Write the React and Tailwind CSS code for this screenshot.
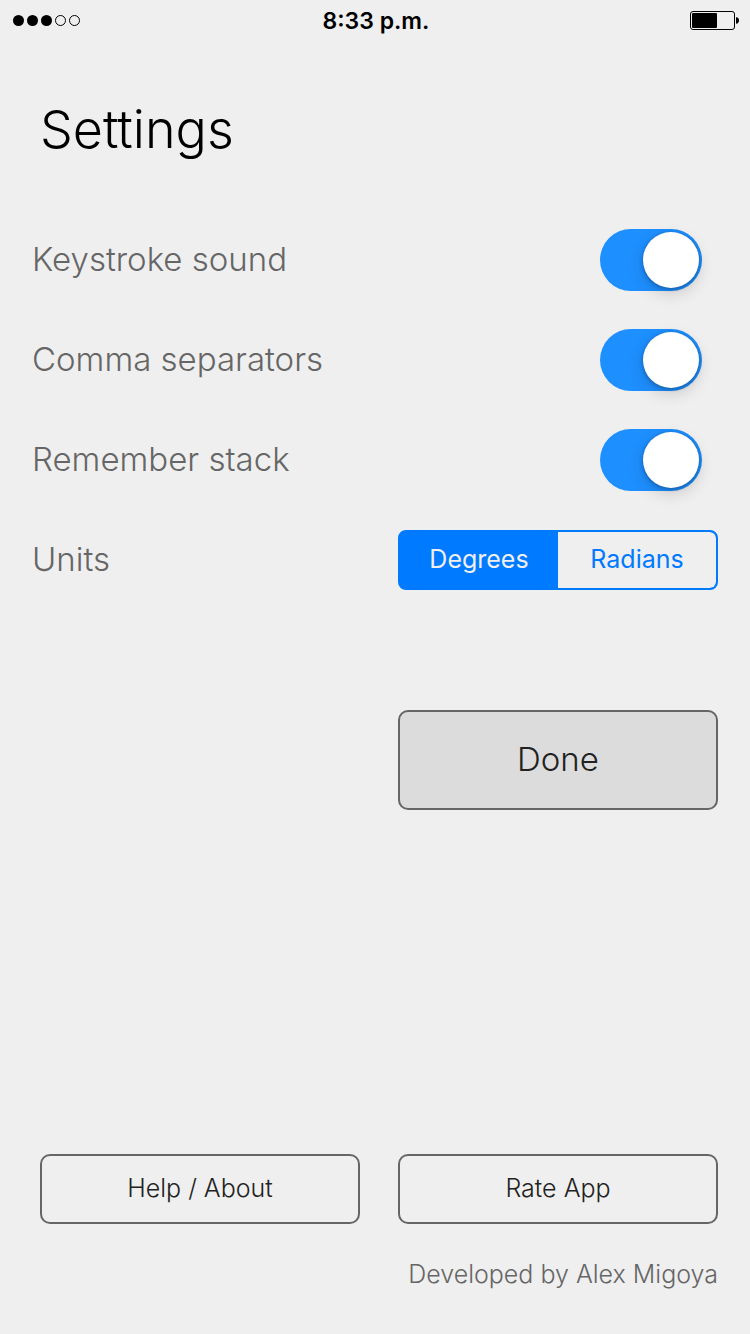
import React, { useState } from "react";

const StatusBar = () => {
  return (
    <header className="grid grid-cols-3 items-center h-[42px] pl-3 pr-2.5">
      <svg width="70" height="12" viewBox="0 0 70 12" aria-hidden="true">
        <circle cx="6.5" cy="5.5" r="5.5" />
        <circle cx="20.5" cy="5.5" r="5.5" />
        <circle cx="34.5" cy="5.5" r="5.5" />
        <circle cx="48.5" cy="5.5" r="5" fill="none" stroke="#000" />
        <circle cx="62.5" cy="5.5" r="5" fill="none" stroke="#000" />
      </svg>
      <p className="text-center text-[23px] font-semibold">8:33 p.m.</p>
      <svg
        width="50"
        height="20"
        viewBox="0 0 50 20"
        className="justify-self-end"
        aria-hidden="true"
      >
        <rect x="0.5" y="0.5" width="44" height="18" rx="2.5" fill="none" stroke="#000" />
        <rect x="2" y="2" width="25" height="15" rx="1" />
        <path d="M46 6.5c1-.6 3 .6 3 3s-2 3.600-3 3z" />
      </svg>
    </header>
  );
};

const SwitchRow = ({ id, label }) => {
  const [isOn, setIsOn] = useState(true);

  return (
    <div className="flex items-center justify-between h-[100px] pr-4">
      <label htmlFor={id}>{label}</label>
      <input
        id={id}
        type="checkbox"
        role="switch"
        checked={isOn}
        onChange={() => setIsOn(!isOn)}
        className="appearance-none w-[102px] h-[62px] rounded-full bg-gray-300 checked:bg-[#1e8fff] cursor-pointer p-[3px] before:block before:size-14 before:rounded-full before:bg-white before:shadow-[0_1px_4px_rgba(0,0,0,0.3),0_6px_16px_rgba(0,0,0,0.15)] checked:before:ml-10"
      />
    </div>
  );
};

const App = () => {
  const [unit, setUnit] = useState("Degrees");

  return (
    <div className="flex flex-col min-h-screen bg-[#efefef] text-black font-['Inter',sans-serif]">
      <StatusBar />
      <main className="flex flex-col grow px-8 pb-[42px]">
        <h1 className="pl-2 mt-[54px] text-[52px] leading-[68px] font-light">
          Settings
        </h1>
        <div className="mt-[46px] text-[33px] font-light text-[#666]">
          <SwitchRow id="sound" label="Keystroke sound" />
          <SwitchRow id="commas" label="Comma separators" />
          <SwitchRow id="stack" label="Remember stack" />
          <div className="flex items-center justify-between h-[100px]">
            <p>Units</p>
            <div className="grid grid-cols-2 w-80 h-[60px] overflow-hidden text-[25px] font-normal border-2 border-[#007aff] bg-[#007aff] rounded-lg">
              {["Degrees", "Radians"].map((name) => (
                <button
                  key={name}
                  onClick={() => setUnit(name)}
                  aria-pressed={unit === name}
                  className={
                    unit === name
                      ? "bg-[#007aff] text-[#efefef]"
                      : "bg-[#efefef] text-[#007aff] first:rounded-l-md last:rounded-r-md"
                  }
                >
                  {name}
                </button>
              ))}
            </div>
          </div>
        </div>
        <button className="self-end w-80 h-[100px] mt-[100px] text-[33px] font-light text-[#222] bg-[#dcdcdc] border-2 border-[#666] rounded-[10px]">
          Done
        </button>
        <div className="flex justify-between pl-2 mt-auto text-[25px] font-light text-[#222]">
          <button className="w-80 h-[70px] border-2 border-[#666] rounded-[10px]">
            Help / About
          </button>
          <button className="w-80 h-[70px] border-2 border-[#666] rounded-[10px]">
            Rate App
          </button>
        </div>
        <p className="mt-8 text-right text-[25px] leading-9 font-light text-[#666]">
          Developed by Alex Migoya
        </p>
      </main>
    </div>
  );
};

export default App;
